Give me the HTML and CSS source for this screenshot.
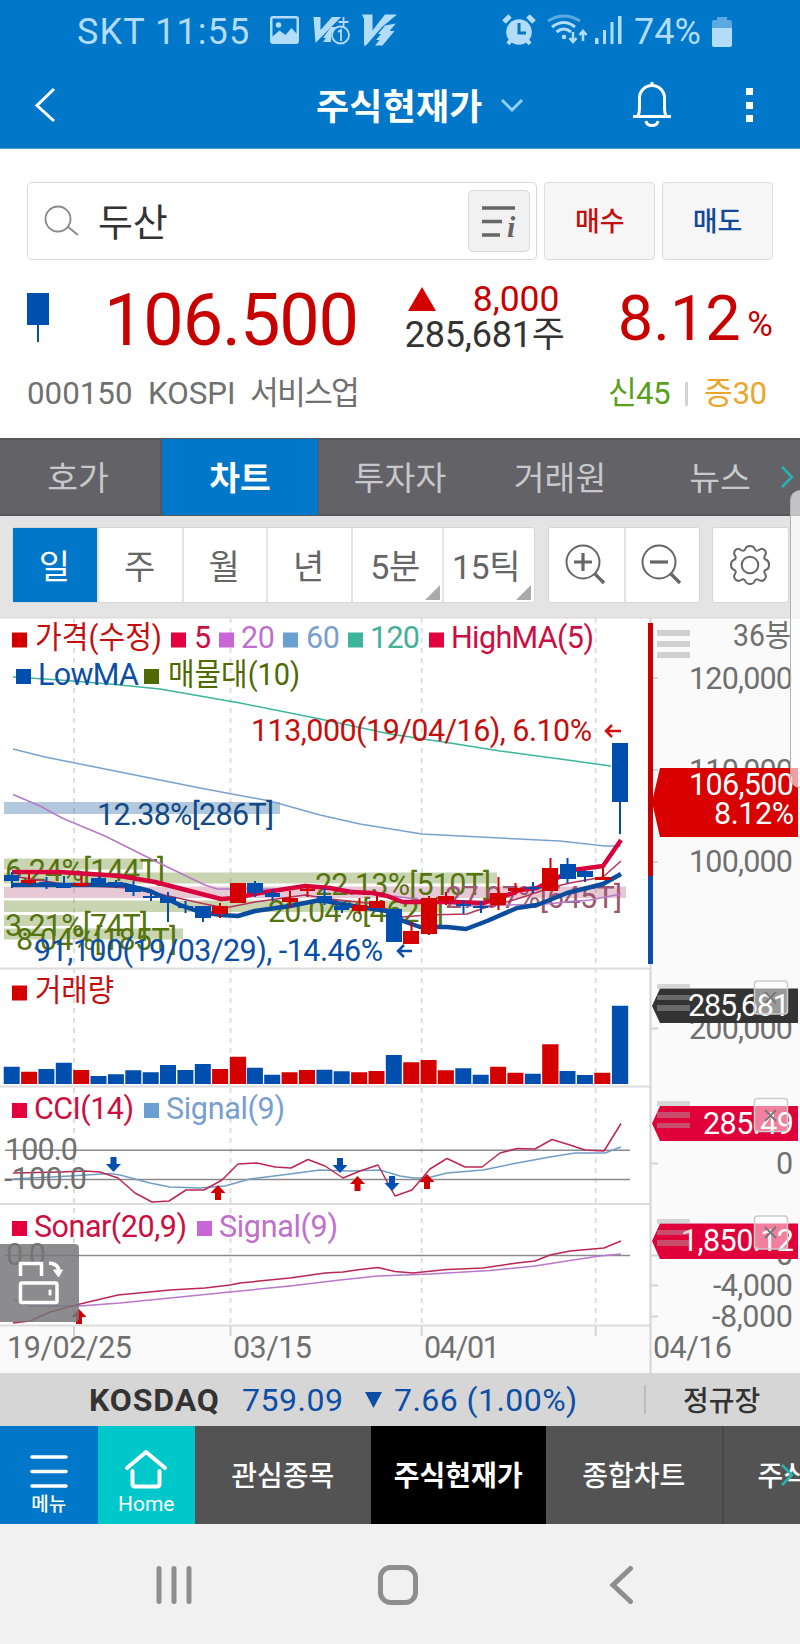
FILE: index.html
```html
<!DOCTYPE html>
<html lang="ko">
<head>
<meta charset="utf-8">
<title>주식현재가</title>
<link rel="stylesheet" href="styles.css">
</head>
<body>
<div class="app">
  <header class="top">
    <div class="status">
      <span class="carrier">SKT 11:55</span>
      <svg class="st-left" width="130" height="34" viewBox="268 14 130 34">
        <path fill-rule="evenodd" d="M273 16h23a3 3 0 0 1 3 3v22a3 3 0 0 1-3 3h-23a3 3 0 0 1-3-3V19a3 3 0 0 1 3-3zM272.500 18.500v18l7-6 6 4.500 6-7 5 5.500v-15z"/>
        <circle cx="278.500" cy="25" r="2.800"/>
        <path d="M313.500 17h7v13L332 17h9L315.500 43z"/>
        <path d="M331 27h7l-5 6h-2v9h-8l3-4h-3z"/>
        <circle cx="340.500" cy="35" r="8.500" class="st-ring"/>
        <path class="st-line" d="M338 32l3-2v11M343.500 17v10M338.500 22h10"/>
        <path d="M362 14.500h10.500v16L385 14.500h12L382 27 366 45.500h-2V19z"/>
        <path d="M385 25.500l11-2-6.500 7.500h5L382.500 45.500H375l4.500-5.500h-3.500l5-6h-3z"/>
      </svg>
      <svg class="st-right" width="122" height="34" viewBox="502 14 122 34">
        <circle cx="519" cy="32" r="12.800"/>
        <path d="M504 22l6-6M528 16l6 6" stroke-width="5" class="st-stroke"/>
        <path d="M511 40l-3 4M527 40l3 4" stroke-width="4" class="st-stroke"/>
        <path d="M519 23v10h7" class="st-cut"/>
        <path d="M548 21q16-10 32 0" class="st-line" opacity=".5"/>
        <path d="M552 27q12-9 23 0M556.500 32q7.500-6 14.500 0" class="st-stroke" stroke-width="3"/>
        <circle cx="564" cy="37" r="2.300"/>
        <path d="M573 32v9M569.500 38l3.500 4 3.500-4M583 41v-9M579.500 35l3.500-4 3.500 4" class="st-stroke" stroke-width="2.500"/>
        <path d="M595 38h3.500v6H595zM603 30h3v14h-3zM610.500 22h3v22h-3zM618 16h3.500v28H618z"/>
      </svg>
      <span class="percent">74%</span>
      <svg class="battery" width="20" height="31" viewBox="712 14 20 31">
        <path opacity=".5" d="M717 15h10v3h3a2 2 0 0 1 2 2v6h-20v-6a2 2 0 0 1 2-2h3z"/><path d="M712 26h20v17a2 2 0 0 1-2 2h-16a2 2 0 0 1-2-2z"/>
      </svg>
    </div>
    <div class="titlebar">
      <svg class="back" width="22" height="36" viewBox="0 0 22 36"><path d="M20 2L3 18.500 20 34"/></svg>
      <h1>주식현재가</h1>
      <svg class="down" width="24" height="14" viewBox="0 0 24 14"><path d="M2 2l10 10L22 2"/></svg>
      <svg class="bell" width="40" height="46" viewBox="0 0 40 46"><path d="M20 5V1M1 35.500h38M6 35q1.500-3 1.500-8V17a12.500 12.500 0 0 1 25 0v10q0 5 1.500 8M14 40c1 6 11 6 12 0"/></svg>
      <div class="dots"><i></i><i></i><i></i></div>
    </div>
  </header>

  <section class="quote">
    <div class="search-row">
      <div class="search">
        <svg width="36" height="32" viewBox="0 0 36 32"><circle cx="14" cy="14" r="12.500"/><path d="M23.500 21.500L34 30"/></svg>
        <span>두산</span>
        <div class="info"><svg width="36" height="34" viewBox="0 0 36 34"><path d="M1 4h33M1 17.500h20M1 31h18"/><text x="26" y="33">i</text></svg></div>
      </div>
      <div class="trade buy">매수</div>
      <div class="trade sell">매도</div>
    </div>
    <div class="price-row">
      <div class="candle"><b></b><i></i></div>
      <div class="price">106.500</div>
      <div class="change">
        <div class="diff"><svg width="28" height="24" viewBox="0 0 28 24"><path d="M14 0l14 24H0z"/></svg><span>8,000</span></div>
        <div class="vol">285,681주</div>
      </div>
      <div class="rate">8.12</div><div class="rate-unit">%</div>
    </div>
    <div class="meta">
      <span>000150</span><span>KOSPI</span><span class="sector">서비스업</span>
      <span class="credit">신45</span><i></i><span class="margin">증30</span>
    </div>
  </section>

  <nav class="tabs">
    <div>호가</div><div class="on">차트</div><div>투자자</div><div>거래원</div><div>뉴스</div>
    <svg class="more" width="14" height="22" viewBox="0 0 14 22"><path d="M2 1l10 10L2 21"/></svg>
  </nav>

  <div class="tools">
    <div class="group periods">
      <div class="on">일</div><div>주</div><div>월</div><div>년</div><div class="drop">5분</div><div class="drop">15틱</div>
    </div>
    <div class="group zooms">
      <div><svg width="44" height="44" viewBox="0 0 44 44"><circle cx="19" cy="19" r="16.500"/><path d="M31 31l9 9" class="thick"/><path d="M10 19h18M19 10v18" class="sign"/></svg></div>
      <div><svg width="44" height="44" viewBox="0 0 44 44"><circle cx="19" cy="19" r="16.500"/><path d="M31 31l9 9" class="thick"/><path d="M10 19h18" class="sign"/></svg></div>
    </div>
    <div class="group gear">
      <div><svg width="44" height="44" viewBox="-22 -22 44 44"><circle r="8.300"/><path d="M-4.500-16.500q1-2.500 4.500-2.500t4.500 2.500q1 3.500 4.500 1.500 3-2.500 5.500 0t.500 5.500q-2 3.500 1.500 4.500 2.500 1 2.500 5t-2.500 4.500q-3.500 1-1.500 4.500 2 3-.500 5.500t-5.500.500q-3.500-2-4.500 1.500-1 2.500-4.500 2.500t-4.500-2.500q-1-3.500-4.500-1.500-3 2-5.500-.500t-.500-5.500q2-3.500-1.500-4.500-2.500-1-2.500-4.500t2.500-5q3.500-1 1.500-4.500-2-3 .500-5.500t5.500 0q3.500 2 4.500-1.500z"/></svg></div>
    </div>
  </div>

  <svg class="chart" width="800" height="756" viewBox="0 617 800 756">
    <rect y="617" width="800" height="756" fill="#fff"/>
    <path d="M650 617h150v756H0v-48h650z" fill="#fafafa"/>
    <path class="grid" d="M74 618v707M230.500 618v707M421.700 618v707M595.700 618v707"/>
    <path class="rule" d="M0 617.500h800M0 968.500h650M0 1086.500h650M0 1204h650M0 1325.500h650"/>
    <path class="axis" d="M650.500 618v755M74 1326v10M230.500 1326v10M421.700 1326v10M595.700 1326v10M651 678h7M651 770h7M651 862h7M651 1028.500h7M651 1163.500h7M651 1255.500h7M651 1285.500h7M651 1316.500h7"/>

    <!-- price pane: volume-by-price bands -->
    <path fill="#1f5f98" opacity=".34" d="M4 802h276v12H4z"/>
    <path fill="#5b7c10" opacity=".33" d="M4 858.500h139v11H4zM4 872.500h493v11H4zM4 900.500h436v11.500H4zM4 915h71v11H4zM4 928.500h179v11H4z"/>
    <path fill="#9c2854" opacity=".25" d="M4 886.500h622v11.500H4z"/>
    <g class="t olive">
      <text x="5" y="881" textLength="160">6.24%[144T]</text>
      <text x="315" y="895" textLength="176">22.13%[510T]</text>
      <text x="268" y="922" textLength="176">20.04%[462T]</text>
      <text x="5" y="936" textLength="143">3.21%[74T]</text>
      <text x="16" y="950" textLength="161">8.04%[185T]</text>
    </g>
    <text class="t" x="445" y="908" textLength="177" fill="#9c5870">27.97%[645T]</text>

    <g class="ln">
      <path stroke="#3cb59c" d="M13 677L60 680 110 684 160 689 240 703 320 719 390 734 450 743 500 751 560 759 611 766"/>
      <path stroke="#78a2cd" d="M13 749L45 757 110 770 200 788 270 801 320 815 360 824 422 834 480 837 560 841 605 846 621 846"/>
      <path stroke="#b57ac6" d="M13 794.500L40 806 62 818 105 836 155 861 205 885 217 889H270L330 887 400 897 470 906 545 904 590 900 621 894"/>
      <path stroke="#b7325b" d="M12 876L70 885 130 888 155 893 205 904 225 908 255 902 305 895 330 899 376 904 403 917 427 915 467 914 487 907 500 904 520 898 553 887 570 883 603 877 621 861"/>
      <path stroke="#0c4c9c" stroke-width="4.500" d="M12 885H125L150 891 180 905 200 912 221 915 238 916 255 911 290 906 320 900 353 906 387 911 403 921 420 927H447L466 929 487 921 517 908 537 905 567 893 603 884 621 874"/>
      <path stroke="#d8003c" stroke-width="4.500" d="M12 872L60 872 120 876 155 882 190 891 221 899 235 898 260 893 305 886 330 888 350 892 373 893 387 896 403 902 453 902 483 903 500 898 520 890 537 888 553 880 573 870 603 866 621 840"/>
    </g>

    <g fill="#004eae">
      <path d="M4 875h15v6H4zM39 882h15v2H39zM56 883h15v5H56zM91 878h15v5H91zM108 882h15v4H108zM125 886h16v6H125zM143 896h15v2H143zM160 897h16v6H160zM178 906h15v2H178zM195 906h16v12H195zM247 883h16v10H247zM265 893h15v4H265zM317 896h15v7H317zM334 906h15v4H334zM386 909h16v33H386zM456 904h15v2H456zM473 906h15v2H473zM525 887h15v2H525zM560 864h16v15H560zM577 871h16v6H577zM612 743h16v59H612z"/>
      <path d="M11 872h2v16h-2zM45.500 877h2v12h-2zM63 876h2v12h-2zM98 876h2v9h-2zM115 880h2v8h-2zM132.500 881h2v15h-2zM150 892h2v9h-2zM167 892h2v30h-2zM184.500 901h2v12h-2zM202 906h2v16h-2zM254 881h2v16h-2zM271.500 890h2v11h-2zM323.500 888h2v17h-2zM341 903h2v10h-2zM462.500 900h2v14h-2zM480 901h2v12h-2zM532 882h2v11h-2zM566.500 858h2v25h-2zM584 870h2v12h-2zM619 802h2v32h-2z"/>
    </g>
    <g fill="#d40000">
      <path d="M21 880h15v3H21zM73 883h16v3H73zM212 906h16v8H212zM230 883h16v20H230zM282 898h16v4H282zM300 889h15v2H300zM352 905h15v6H352zM369 901h16v7H369zM403 931h16v13H403zM421 898h16v36H421zM438 896h16v5H438zM490 893h16v12H490zM508 888h16v3H508zM542 868h16v23H542zM595 877h16v3H595z"/>
      <path d="M28 871h2v14h-2zM80.500 876h2v11h-2zM219 903h2v15h-2zM289 891h2v17h-2zM306.500 884h2v13h-2zM358.500 898h2v16h-2zM376 895h2v13h-2zM410.500 922h2v10h-2zM428 896h2v39h-2zM445 892h2v13h-2zM497.500 877h2v33h-2zM514.500 883h2v12h-2zM549.500 858h2v12h-2zM602 868h2v10h-2z"/>
    </g>

    <text class="t" x="97" y="825" textLength="177" fill="#114a84">12.38%[286T]</text>
    <text class="t" x="34" y="961" textLength="349" fill="#0c4ea6">91,100(19/03/29), -14.46%</text>
    <text class="t" x="251" y="741" textLength="341" fill="#c40f0f">113,000(19/04/16), 6.10%</text>
    <path class="arr" stroke="#d01010" d="M621 731h-15M612 725l-6 6 6 6"/>
    <path class="arr" stroke="#0c4ea6" d="M412 951h-14M404 945l-6 6 6 6"/>

    <g class="t">
      <path fill="#d40000" d="M12 632.500h15v15H12z"/><text x="35" y="648" textLength="127" lengthAdjust="spacingAndGlyphs" fill="#c40f0f">가격(수정)</text>
      <path fill="#e4003c" d="M171 632.500h15v15H171z"/><text x="194" y="648" fill="#cb0f42">5</text>
      <path fill="#c766d4" d="M219 632.500h15v15H219z"/><text x="241" y="648" textLength="34" fill="#c070cc">20</text>
      <path fill="#6a9fd2" d="M283 632.500h15v15H283z"/><text x="306" y="648" textLength="34" fill="#789fce">60</text>
      <path fill="#3cb59c" d="M348 632.500h15v15H348z"/><text x="370" y="648" textLength="50" fill="#43b09b">120</text>
      <path fill="#e4003c" d="M429 632.500h15v15H429z"/><text x="451" y="648" textLength="143" fill="#cb0f42">HighMA(5)</text>
      <path fill="#004eae" d="M16 669h15v15H16z"/><text x="38" y="685" textLength="101" fill="#0c4ea6">LowMA</text>
      <path fill="#4f6a00" d="M144 669h15v15H144z"/><text x="168" y="685" textLength="132" lengthAdjust="spacingAndGlyphs" fill="#4f6a00">매물대(10)</text>
      <path fill="#d40000" d="M12 985.500h15v15H12z"/><text x="35" y="1001" textLength="79" lengthAdjust="spacingAndGlyphs" fill="#c40f0f">거래량</text>
      <path fill="#e4003c" d="M12 1103h15v15H12z"/><text x="34" y="1119" textLength="100" fill="#cb0f42">CCI(14)</text>
      <path fill="#6a9fd2" d="M144 1103h15v15H144z"/><text x="166" y="1119" textLength="119" fill="#789fce">Signal(9)</text>
      <path fill="#e4003c" d="M12 1221h15v15H12z"/><text x="34" y="1237" textLength="153" fill="#cb0f42">Sonar(20,9)</text>
      <path fill="#c766d4" d="M197 1221h15v15H197z"/><text x="219" y="1237" textLength="119" fill="#c070cc">Signal(9)</text>
    </g>

    <!-- volume pane -->
    <path fill="#004eae" d="M3.700 1066.700h16V1084h-16zM38.400 1069h16v15h-16zM55.800 1062.700h16V1084h-16zM90.500 1076h16v8h-16zM107.900 1074.300h16v9.700h-16zM125.300 1070.300h16v13.700h-16zM142.700 1072.300h16v11.700h-16zM160 1065h16v19h-16zM177.400 1070h16v14h-16zM194.800 1064h16v20h-16zM246.900 1067.700h16v16.300h-16zM264.200 1074.700h16v9.300h-16zM316.400 1069.700h16v14.300h-16zM333.700 1071.300h16v12.700h-16zM385.800 1055h16v29h-16zM455.300 1068.300h16v15.700h-16zM472.700 1074.700h16v9.300h-16zM524.800 1073.700h16v10.300h-16zM559.500 1071h16v13h-16zM576.900 1075h16v9h-16zM611.900 1005.700h16.300v78.300h-16.300z"/>
    <path fill="#d40000" d="M21.100 1071.700h16V1084h-16zM73.200 1070h16v14h-16zM212.100 1069h16v15h-16zM229.800 1056.700h16.300V1084h-16.300zM281.600 1072.300h16v11.700h-16zM299 1070h16v14h-16zM351.100 1072.300h16v11.700h-16zM368.500 1071h16v13h-16zM403.200 1062.300h16v21.700h-16zM420.600 1060h16v24h-16zM437.900 1070.300h16v13.700h-16zM490.100 1066.700h16v17.300h-16zM507.400 1072.700h16v11.300h-16zM542.200 1044.300h16.300V1084h-16.300zM594.300 1072.700h16v11.300h-16z"/>

    <!-- oscillator panes -->
    <path class="level" d="M5 1150.300h625M5 1179.500h625M5 1255.500h625"/>
    <g class="ln">
      <path stroke="#6f9ec5" d="M13 1179L70 1176 110 1173.500 120 1175 150 1183 170 1187 200 1188 225 1186 250 1179 290 1174 320 1170 350 1171 380 1170 400 1176 414 1178 427 1178 447 1173 483 1170 517 1163 550 1157 575 1153 605 1153 621 1147"/>
      <path stroke="#bb2752" d="M13 1173L60 1172 85 1171 100 1172 118 1178 135 1193 152 1202 169 1201 186 1190 204 1190 222 1180 238 1164 257 1163 275 1167 291 1168 308 1159.500 325 1166 343 1178 360 1171 378 1165 395 1196 412 1190 430 1169 447 1158.500 465 1167 482 1167 500 1153 517 1148.500 535 1149 552 1139.500 570 1145 585 1150 604 1151 621 1123.500"/>
      <path stroke="#b878cc" d="M13 1299L30 1306H80L120 1303 180 1297 230 1292 290 1286 340 1280 378 1276 430 1274 490 1270.500 535 1266 570 1260.500 600 1256 621 1254"/>
      <path stroke="#bb2752" d="M13 1323L30 1321 50 1312 80 1304 118 1295 170 1290 205 1288 230 1285 240 1283 290 1278 325 1273 343 1272 360 1269.500 378 1267.500 395 1271.500 413 1273 447 1269.500 483 1268 517 1263 535 1261 550 1255 570 1251 604 1248 621 1241"/>
    </g>
    <g fill="#004eae"><path d="M110.500 1157h6v7h4.500l-7.500 8-7.500-8h4.500z"/><path d="M337 1158h6v7h4.500l-7.500 8-7.500-8h4.500z"/><path d="M389 1176h6v7h4.500l-7.500 8-7.500-8h4.500z"/></g>
    <g fill="#d00000"><path d="M215 1200h6v-7h4.500l-7.500-8-7.500 8h4.500z"/><path d="M354.500 1191h6v-7h4.500l-7.500-8-7.500 8h4.500z"/><path d="M424 1189h6v-7h4.500l-7.500-8-7.500 8h4.500z"/><path d="M76 1324h6v-7h4.500l-7.500-8-7.500 8h4.500z"/></g>
    <g class="t gray">
      <text x="5" y="1160" textLength="73">100.0</text>
      <text x="4" y="1189" textLength="83">-100.0</text>
      <text x="6" y="1265" textLength="40">0.0</text>
      <text x="7" y="1358" textLength="125">19/02/25</text>
      <text x="233" y="1358" textLength="79">03/15</text>
      <text x="424" y="1358" textLength="76">04/01</text>
      <text x="653" y="1358" textLength="79">04/16</text>
    </g>

    <!-- value axis -->
    <path fill="#c80000" d="M648 623h5v253h-5z"/><path fill="#0c4ea6" d="M648 876h5v88h-5z"/>
    <g class="t gray">
      <text x="733" y="646" textLength="58" lengthAdjust="spacingAndGlyphs">36봉</text>
      <text x="689" y="689" textLength="104">120,000</text><text x="689" y="781" textLength="104">110,000</text><text x="689" y="872" textLength="104">100,000</text>
      <text x="689" y="1039" textLength="104">200,000</text><text x="776" y="1174">0</text><text x="776" y="1265">0</text>
      <text x="713" y="1296" textLength="80">-4,000</text><text x="712" y="1327" textLength="81">-8,000</text>
    </g>
    <path fill="#d80000" d="M652 802l8-34h138v69H660z"/>
    <path fill="#333" d="M652 1006l8-17.500h138v34.500H660z"/>
    <path fill="#e0003a" d="M652 1123.500l8-17.500h138v35H660zM652 1241l8-17.500h138V1259H660z"/>
    <path fill="#b4b4b4" opacity=".6" d="M657 630h33v6h-33zM657 641h33v6h-33zM657 652h33v6h-33z"/>
    <g class="t" fill="#fff">
      <text x="689" y="795" textLength="105">106,500</text><text x="714" y="824" textLength="80">8.12%</text>
      <text x="688" y="1016" textLength="102">285,681</text><text x="703" y="1134" textLength="91">285.49</text><text x="681" y="1251" textLength="113">1,850.12</text>
    </g>
    <path fill="#aaa" opacity=".45" d="M657 984h33v5h-33zM657 995h33v5h-33zM657 1005h33v6h-33zM657 1101h33v5h-33zM657 1112h33v6h-33zM657 1123h33v5h-33zM657 1219h33v5h-33zM657 1230h33v5h-33zM657 1240h33v6h-33z"/>
    <g class="close"><rect x="754.500" y="981" width="33" height="33" rx="3"/><rect x="754.500" y="1098.500" width="33" height="33" rx="3"/><rect x="754.500" y="1216" width="33" height="33" rx="3"/>
      <path d="M765 992l11 11m0-11l-11 11M765 1110l11 11m0-11l-11 11M765 1227l11 11m0-11l-11 11"/></g>

    <!-- rotate handle -->
    <path fill="#76767a" fill-opacity=".84" d="M0 1244h75a4 4 0 0 1 4 4v70a4 4 0 0 1-4 4H0z"/>
    <g class="rot"><path d="M20.500 1276v-12.500h21v12.500"/><rect x="20.500" y="1283" width="36.500" height="19.500" rx="1.500"/><path d="M49 1263q10 1 10 9"/><path class="solid" d="M53.500 1270h9l-4 7z"/><path class="solid" d="M49 1290h2v5h-2z"/></g>
  </svg>

  <div class="ticker">
    <b>KOSDAQ</b><span class="idx">759.09</span>
    <svg width="17" height="16" viewBox="0 0 17 16"><path d="M0 0h17L8.500 16z"/></svg>
    <span class="chg">7.66 (1.00%)</span><i></i><span class="session">정규장</span>
  </div>
  <nav class="menu">
    <div class="m-menu"><svg width="40" height="36" viewBox="0 0 40 36"><path d="M3 3h34M3 17.500h34M3 32h34"/></svg><span>메뉴</span></div>
    <div class="m-home"><svg width="44" height="42" viewBox="0 0 44 42"><path d="M3 20L22 4l19 16M8.500 23v13q0 2.500 2.500 2.500h22q2.500 0 2.500-2.500V23"/></svg><span>Home</span></div>
    <div>관심종목</div><div class="on">주식현재가</div><div>종합차트</div><div class="last">주식</div>
    <svg class="more" width="14" height="22" viewBox="0 0 14 22"><path d="M2 1l10 10L2 21"/></svg>
  </nav>
  <footer class="sysnav">
    <svg width="40" height="40" viewBox="0 0 40 40"><path d="M5 3.500v33M20 3.500v33M35 3.500v33"/></svg>
    <svg width="40" height="40" viewBox="0 0 40 40"><rect x="2.500" y="2.500" width="35" height="35" rx="10"/></svg>
    <svg width="40" height="40" viewBox="0 0 40 40"><path d="M28.500 3.500L11 20l17.500 16.500"/></svg>
  </footer>
  <div class="edge"></div>
</div>
</body>
</html>
```
FILE: styles.css
```css
* { box-sizing: border-box; }
body { margin: 0; background: #f1f1f1; font-family: Roboto, "Noto Sans CJK KR", sans-serif; color: #333; }
svg { display: block; flex: none; }
span, h1, .price, .rate, .tabs div, .menu div, .trade { white-space: nowrap; }
.app { position: relative; width: 800px; height: 1644px; overflow: hidden; display: flex; flex-direction: column; }

.top { height: 149px; background: #0077c8; border-bottom: 1px solid #4ba0d8; flex: none; }
.status { height: 62px; display: flex; align-items: center; color: #b3dcf8; font-size: 36px; padding-left: 77px; }
.status svg { fill: #b3dcf8; }
.carrier { width: 191px; letter-spacing: 1.1px; padding-top: 2px; }
.st-right { margin-left: 104px; }
.percent { margin-left: 10px; width: 78px; padding-top: 2px; }
.st-ring, .st-line { fill: none; stroke: #b3dcf8; stroke-width: 1.8; }
.st-line[opacity] { stroke-width: 3; }
.st-ring { fill: #0077c8; }
.st-stroke { fill: none; stroke: #b3dcf8; }
.st-cut { fill: none; stroke: #0077c8; stroke-width: 3; }
.titlebar { height: 86px; display: flex; align-items: center; padding-left: 34px; }
.titlebar svg { fill: none; stroke: #fff; stroke-width: 3; }
.titlebar h1 { margin: -3px 0 0 260px; width: 184px; font-size: 36px; font-weight: 700; color: #fff; letter-spacing: .2px; }
.titlebar .down { stroke: #8fd0f6; }
.titlebar .bell { margin: -2px 0 0 108px; }
.dots { margin-left: 74px; display: grid; gap: 6.5px; }
.dots i { width: 7px; height: 7px; background: #fff; }

.quote { height: 289px; padding: 33px 27px 0; background: #fff; flex: none; }
.search-row { display: flex; height: 78px; gap: 7px; }
.search { width: 511px; border: 1.5px solid #d8d8d8; border-radius: 5px; display: flex; align-items: center; padding: 0 6px 0 16px; }
.search > svg { fill: none; stroke: #888; stroke-width: 1.8; }
.search span { font-size: 38px; margin: -4px 0 0 18px; flex: 1; letter-spacing: -.2px; }
.info { width: 62px; height: 62px; background: #f1f1f1; border: 1.5px solid #d8d8d8; border-radius: 5px; display: grid; place-items: center; }
.info svg { stroke: #666; stroke-width: 3.5; fill: none; }
.info text { font: italic 700 30px "Liberation Serif", serif; fill: #666; stroke: none; }
.trade { width: 111px; border: 1.5px solid #dcdcdc; border-radius: 4px; background: #f6f6f6; font-size: 27px; font-weight: 500; display: grid; place-items: center; padding-bottom: 3px; }
.buy { color: #c40f0f; }
.sell { color: #12499c; }
.price-row { display: flex; height: 112px; padding-top: 13px; color: #c80000; }
.candle { width: 22px; padding-top: 20px; }
.candle b { display: block; height: 32px; background: #004eae; }
.candle i { display: block; width: 2px; height: 17px; margin-left: 10px; background: #0c4ea6; }
.price { margin-left: 55px; width: 300px; font-size: 72px; line-height: 96px; letter-spacing: -1.100px; }
.change { width: 216px; }
.diff { display: flex; height: 44px; padding: 14px 0 0 5px; }
.diff svg { fill: #d40000; }
.diff span { font-size: 35.500px; line-height: 24px; margin-left: 37px; }
.vol { font-size: 36px; line-height: 36px; color: #333; white-space: nowrap; margin-left: 2px; letter-spacing: -.200px; }
.rate { width: 129px; font-size: 63px; line-height: 91px; }
.rate-unit { font-size: 35px; line-height: 104px; margin-left: 1px; }
.meta { display: flex; align-items: center; height: 44px; font-size: 31.300px; line-height: 44px; color: #707070; }
.meta span:nth-child(1) { width: 121px; }
.meta span:nth-child(2) { width: 102px; }
.meta .sector { width: 358px; letter-spacing: -1.800px; }
.meta .credit { width: 77px; color: #5a9f1e; letter-spacing: -.700px; }
.meta i { width: 3px; height: 24px; background: #d4d4d4; margin-right: 16px; }
.meta .margin { color: #eca52c; letter-spacing: -.400px; }

.tabs { position: relative; height: 78px; display: flex; flex: none; background: #636267; border-top: 2px solid #57565b; border-bottom: 2px solid #57565b; }
.tabs div { width: 160px; display: grid; place-items: center; font-size: 33.500px; color: #c8c8cb; padding-bottom: 3px; padding-left: 2px; }
.tabs div:first-child { width: 162px; padding-right: 6px; border-right: 2px solid #57565b; }
.tabs .on { width: 157px; margin: -1px 0; background: #0077c8; color: #fff; font-weight: 700; border-right: 1px solid #57565b; padding-left: 0; }
.more { position: absolute; right: 6px; top: 26px; fill: none; stroke: #27b5b0; stroke-width: 2.500; }

.tools { height: 101px; background: #e4e4e4; display: flex; padding: 11px 0 0 12px; flex: none; }
.group { display: flex; height: 76px; border: 1.5px solid #d6d6d6; border-radius: 3px; background: #fff; }
.group div { display: grid; place-items: center; border-left: 2px solid #e4e4e4; font-size: 34px; color: #666; }
.group div:first-child { border-left: 0; }
.periods { width: 522.500px; }
.periods div { width: 84.500px; padding-bottom: 2px; padding-right: 1px; }
.periods .on { width: 84px; background: #0077c8; color: #fff; }
.periods .drop { width: 91px; position: relative; letter-spacing: -.500px; padding-right: 4px; }
.drop::after { content: ""; position: absolute; right: 2px; bottom: 2px; border-left: 15px solid transparent; border-bottom: 15px solid #aaa; }
.zooms { width: 152px; margin-left: 13px; }
.zooms div { width: 75px; }
.group svg { fill: none; stroke: #666; stroke-width: 2; }
.group .thick, .group .sign { stroke-width: 3.200; }
.gear { width: 77px; margin-left: 12px; }
.gear div { width: 74px; }

.chart { font-family: Roboto, "Noto Sans CJK KR", sans-serif; }
.grid { fill: none; stroke: #dedede; stroke-width: 2; stroke-dasharray: 5 5; }
.rule { stroke: #dcdcdc; stroke-width: 2; fill: none; }
.axis { stroke: #d4d4d4; stroke-width: 2; fill: none; }
.ln path { fill: none; stroke-width: 1.500; stroke-linejoin: round; }
.ln path[stroke-width] { stroke-width: 4.500; }
.t { font-size: 30.500px; }
.olive { fill: #56740f; }
.gray { fill: #707070; }
.arr { fill: none; stroke-width: 2.500; }
.level { stroke: #8a8a8a; stroke-width: 1.500; }
.close rect { fill: #fff; fill-opacity: .5; stroke: #ccc; stroke-width: 1.500; }
.close path { stroke: #777; stroke-width: 1.800; }
.rot { fill: none; stroke: #fff; stroke-width: 3.500; }
.rot .solid { fill: #fff; stroke-width: 1; }

.ticker { height: 53px; background: #d6d6d6; display: flex; align-items: center; padding-left: 89px; flex: none; font-size: 32px; color: #0c4ea6; }
.ticker b { width: 153px; color: #333; letter-spacing: .900px; font-weight: 700; }
.ticker svg { fill: #0c4ea6; }
.idx { width: 123px; letter-spacing: .500px; }
.chg { width: 268px; margin-left: 12px; letter-spacing: .450px; }
.ticker i { width: 2px; height: 29px; background: #bcbcbc; margin-left: -18px; }
.session { margin-left: 37px; font-size: 28px; font-weight: 500; color: #333; margin-top: -1px; }

.menu { position: relative; height: 98px; display: flex; flex: none; background: #535353; color: #fff; overflow: hidden; }
.menu div { width: 175.500px; flex: none; display: grid; place-items: center; font-size: 28px; font-weight: 500; padding-bottom: 2px; }
.menu .on { background: #000; font-weight: 700; }
.menu .last { width: 176px; border-left: 2px solid #484848; place-items: center start; padding-left: 34px; }
.menu .m-menu, .menu .m-home { width: 97.500px; display: flex; flex-direction: column; align-items: center; padding: 28px 0 0; font-size: 19px; background: #0077c8; }
.menu .m-home { background: #00c8ca; padding-top: 22px; font-size: 21px; font-weight: 400; }
.menu svg { fill: none; stroke: #fff; stroke-width: 4; stroke-linecap: round; stroke-linejoin: round; }
.menu .m-menu svg { stroke-width: 3.600; }
.menu span { line-height: 28px; }
.m-menu span { margin-top: 1px; }
.menu .more { top: 38px; stroke: #27b5b0; stroke-width: 2.500; stroke-linecap: butt; }

.sysnav { height: 120px; flex: none; background: #f1f1f1; display: flex; padding: 41px 0 0 154px; }
.sysnav svg { fill: none; stroke: #8e8e8e; stroke-width: 5; stroke-linecap: round; }
.sysnav svg + svg { margin-left: 184px; }
.edge { position: absolute; left: 790px; top: 490px; width: 24px; height: 298px; border: 1px solid #b0b0b0; border-radius: 10px; background: rgba(255, 255, 255, .62); }
```
